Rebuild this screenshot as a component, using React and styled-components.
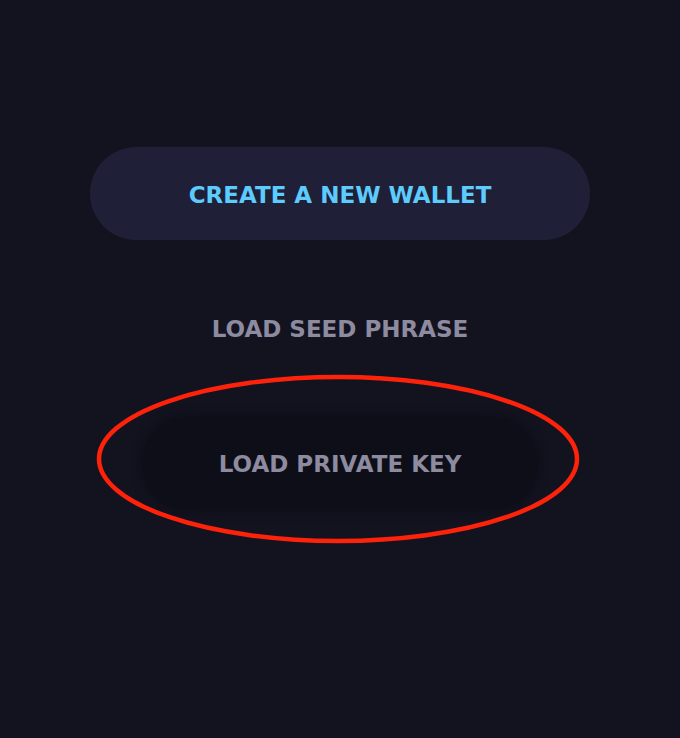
import React from "react";
import styled, { createGlobalStyle } from "styled-components";

const Global = createGlobalStyle`
  html, body { margin: 0; padding: 0; background: #131320; }
  body { font-family: "DejaVu Sans", "Open Sans", sans-serif; }
`;

const Page = styled.div`
  position: relative;
  width: 680px;
  height: 738px;
  background: #131320;
  display: flex;
  flex-direction: column;
  align-items: center;
  padding-top: 147px;
  box-sizing: border-box;
  gap: 42px;
`;

const Button = styled.button`
  border: none;
  outline: none;
  cursor: pointer;
  width: ${(p) => p.$width}px;
  height: 93px;
  padding: 0;
  border-radius: 47px;
  font-family: "DejaVu Sans", "Open Sans", sans-serif;
  font-weight: 700;
  font-size: 23px;
  letter-spacing: 0px;
  text-transform: uppercase;
  display: flex;
  align-items: center;
  justify-content: center;
  ${(p) =>
    p.$variant === "primary" &&
    `
    padding-top: 2px;
    background: #1f1f38;
    color: #5ecbfd;
  `}
  ${(p) =>
    p.$variant === "ghost" &&
    `
    background: transparent;
    color: #8d8b9f;
  `}
  ${(p) =>
    p.$variant === "active" &&
    `
    background: #0e0e19;
    color: #8d8b9f;
    box-shadow: 0 0 8px 3px #0f0f1b;
  `}
`;

const Annotation = styled.svg`
  position: absolute;
  left: 0;
  top: 0;
  pointer-events: none;
`;

export default function App() {
  return (
    <>
      <Global />
      <Page>
        <Button $variant="primary" $width={500}>Create a new wallet</Button>
        <Button $variant="ghost" $width={400}>Load seed phrase</Button>
        <Button $variant="active" $width={396}>Load private key</Button>
        <Annotation width="680" height="738" viewBox="0 0 680 738">
          <ellipse cx="338" cy="459" rx="239" ry="82" fill="none" stroke="#fe220b" strokeWidth="4.5" />
        </Annotation>
      </Page>
    </>
  );
}
